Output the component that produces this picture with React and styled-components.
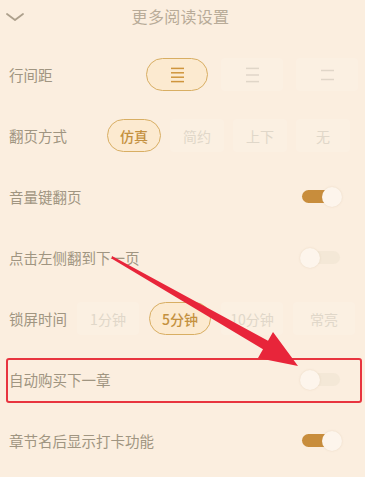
import styled, { createGlobalStyle } from "styled-components";

const GlobalStyle = createGlobalStyle`
  html, body {
    margin: 0;
    padding: 0;
    background: #fbeedf;
  }
  body {
    font-family: "Noto Sans CJK SC", "Noto Sans", sans-serif;
  }
`;

const LineIcon = ({ count, gap, color }) => {
  const h = (count - 1) * gap;
  const top = (16 - h) / 2;
  return (
    <svg width="15" height="16" viewBox="0 0 15 16">
      {Array.from({ length: count }).map((_, i) => (
        <line
          key={i}
          x1="1"
          x2="14"
          y1={top + i * gap}
          y2={top + i * gap}
          stroke={color}
          strokeWidth="1.5"
        />
      ))}
    </svg>
  );
};

const Chevron = () => (
  <svg width="20" height="10" viewBox="0 0 20 10">
    <polyline
      points="2,2 10,8 18,2"
      fill="none"
      stroke="#ada08c"
      strokeWidth="1.8"
      strokeLinecap="round"
      strokeLinejoin="round"
    />
  </svg>
);

const Toggle = ({ on }) => (
  <Switch>
    <Track $on={on} />
    <Knob $on={on} />
  </Switch>
);

const App = () => {
  return (
    <>
      <GlobalStyle />
      <Page>
        <Header>
          <BackButton>
            <Chevron />
          </BackButton>
          <Title>更多阅读设置</Title>
        </Header>
        <List>
          <Row>
            <Label>行间距</Label>
            <Options $gap={13} $end={7}>
              <Option $w={62} $active>
                <LineIcon count={4} gap={4.4} color="#cf953d" />
              </Option>
              <Option $w={62}>
                <LineIcon count={3} gap={6.6} color="#e0d6c8" />
              </Option>
              <Option $w={62}>
                <LineIcon count={2} gap={9} color="#e0d6c8" />
              </Option>
            </Options>
          </Row>
          <Row>
            <Label>翻页方式</Label>
            <Options $gap={9} $end={15}>
              <Option $w={54} $active>仿真</Option>
              <Option $w={54}>简约</Option>
              <Option $w={54}>上下</Option>
              <Option $w={54}>无</Option>
            </Options>
          </Row>
          <Row>
            <Label>音量键翻页</Label>
            <Toggle on />
          </Row>
          <Row>
            <Label>点击左侧翻到下一页</Label>
            <Toggle />
          </Row>
          <Row>
            <Label>锁屏时间</Label>
            <Options $gap={10} $end={10}>
              <Option $w={62}>1分钟</Option>
              <Option $w={62} $active>5分钟</Option>
              <Option $w={62}>10分钟</Option>
              <Option $w={62}>常亮</Option>
            </Options>
          </Row>
          <Row $marked>
            <Label>自动购买下一章</Label>
            <Toggle />
          </Row>
          <Row>
            <Label>章节名后显示打卡功能</Label>
            <Toggle on />
          </Row>
        </List>
        <Arrow viewBox="0 0 365 477">
          <polygon
            points="112,256 268,340.7 273,332 298,366 258,358 263,349.3 111.5,258.5"
            fill="#e8253a"
          />
        </Arrow>
      </Page>
    </>
  );
};

const Page = styled.div`
  position: relative;
  width: 365px;
  height: 477px;
  overflow: hidden;
  background: #fbeedf;
`;

const Header = styled.div`
  display: flex;
  align-items: center;
  justify-content: center;
  height: 32px;
  position: relative;
`;

const BackButton = styled.div`
  position: absolute;
  left: 5px;
  top: 12px;
  display: flex;
`;

const Title = styled.div`
  font-size: 16px;
  color: #b8ab98;
  letter-spacing: 0.3px;
  margin-left: -4px;
`;

const List = styled.div`
  display: flex;
  flex-direction: column;
  padding-top: 12px;
`;

const Row = styled.div`
  position: relative;
  display: flex;
  align-items: center;
  height: 61px;
  padding-left: 9px;

  ${(p) =>
    p.$marked &&
    `
    &::before {
      content: "";
      position: absolute;
      left: 6px;
      right: 3px;
      top: 9px;
      bottom: 7px;
      border: 2px solid #e8343f;
      border-radius: 3px;
      pointer-events: none;
    }
  `}
`;

const Label = styled.div`
  font-size: 14.5px;
  color: #a09581;
  white-space: nowrap;
`;

const Options = styled.div`
  display: flex;
  align-items: center;
  margin-left: auto;
  gap: ${(p) => p.$gap}px;
  padding-right: ${(p) => p.$end}px;
`;

const Option = styled.div`
  box-sizing: border-box;
  width: ${(p) => p.$w}px;
  height: 33px;
  display: flex;
  align-items: center;
  justify-content: center;
  font-size: 14px;
  border-radius: ${(p) => (p.$active ? "17px" : "4px")};
  color: ${(p) => (p.$active ? "#c4913f" : "#e0d7c9")};
  font-weight: ${(p) => (p.$active ? 500 : 400)};
  background: ${(p) => (p.$active ? "#fcead0" : "rgba(255, 255, 255, 0.12)")};
  border: 1.5px solid ${(p) => (p.$active ? "#d8ae63" : "transparent")};
`;

const Switch = styled.div`
  position: relative;
  width: 42px;
  height: 20px;
  margin-left: auto;
  margin-right: 23px;
`;

const Track = styled.div`
  position: absolute;
  left: 2px;
  right: 2px;
  top: 3.5px;
  height: 13px;
  border-radius: 7px;
  background: ${(p) => (p.$on ? "#c88d3c" : "#f4e8d7")};
`;

const Knob = styled.div`
  position: absolute;
  top: 0;
  ${(p) => (p.$on ? "right: 0;" : "left: 0;")}
  width: 20px;
  height: 20px;
  border-radius: 50%;
  background: #fdf5ec;
  box-shadow: 0 0 2px rgba(180, 150, 110, 0.25);
`;

const Arrow = styled.svg`
  position: absolute;
  left: 0;
  top: 0;
  width: 365px;
  height: 477px;
  pointer-events: none;
`;

export default App;
